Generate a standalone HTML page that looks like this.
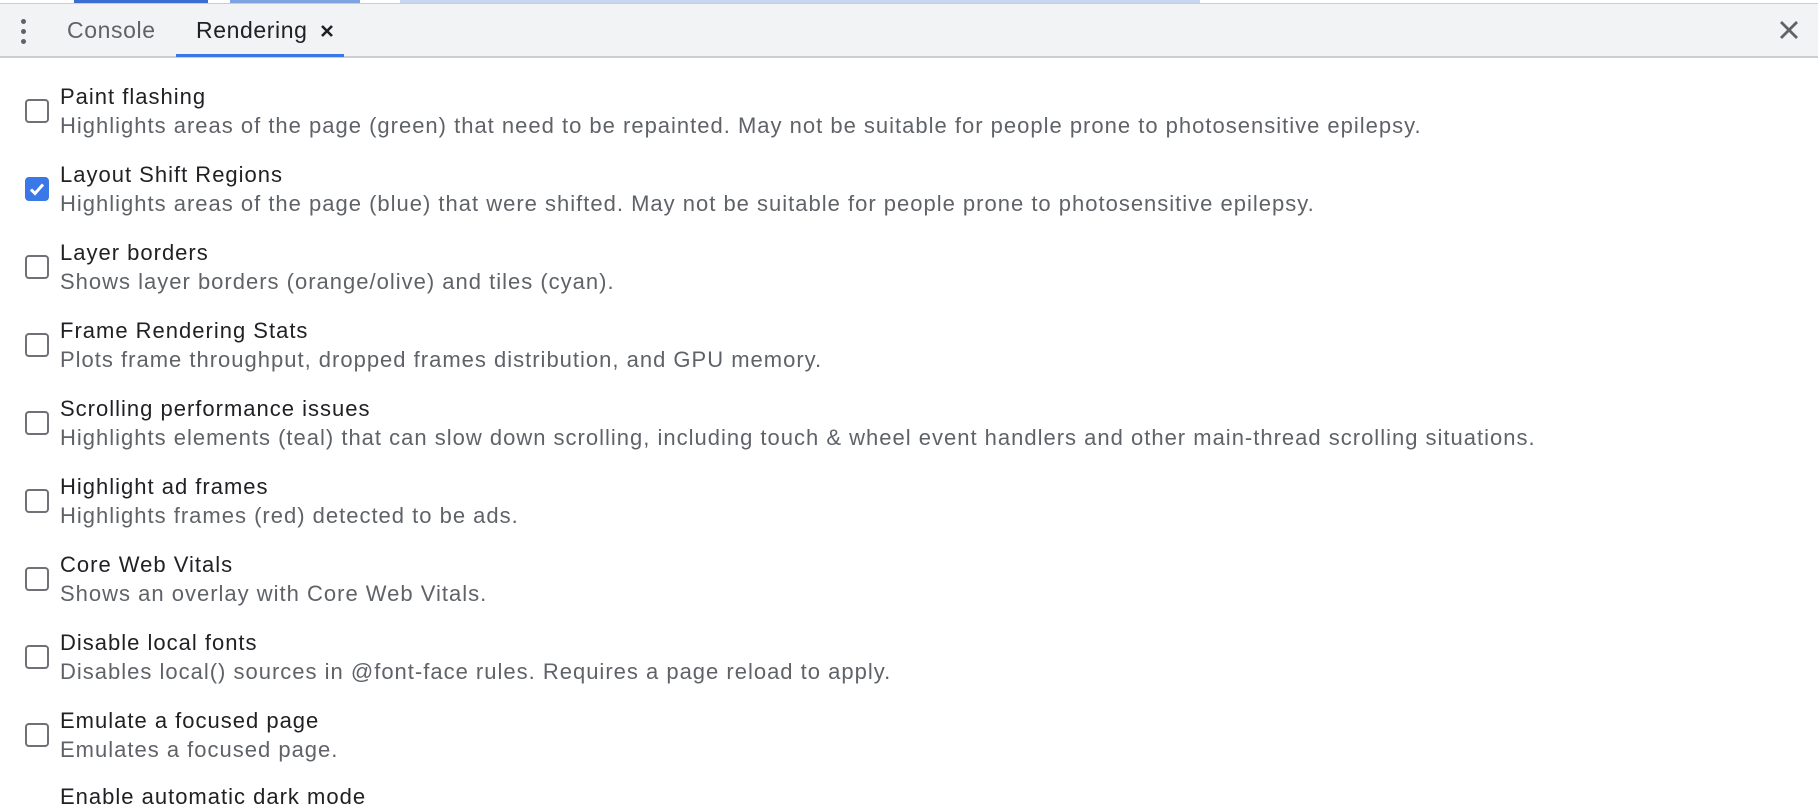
<!DOCTYPE html>
<html><head><meta charset="utf-8"><style>
html,body{margin:0;padding:0;width:1818px;height:792px;overflow:hidden;background:#fff;font-family:"Liberation Sans",Arial,sans-serif;}
.top{position:absolute;left:0;top:0;width:1818px;height:3px;background:#fff;border-bottom:1px solid #cbcdd1;}
.bar{position:absolute;left:0;top:4px;width:1818px;height:52px;background:#f1f3f4;border-bottom:2px solid #cbcdd1;}
.tab{position:absolute;top:4px;height:52px;line-height:52px;font-size:23px;letter-spacing:0.6px;}
.row{position:absolute;left:60px;line-height:29px;letter-spacing:1px;}
.t{font-size:22px;color:#202124;}
.d{font-size:22px;color:#5f6368;}
.cb{position:absolute;left:25px;width:20px;height:20px;border:2px solid #6e7175;border-radius:4px;background:#fff;}
.cb.on{background:#3a78e7;border-color:#3a78e7;}
</style></head><body>
<div class="top"></div>
<div style="position:absolute;left:74px;top:0;width:134px;height:3px;background:#3a6fd0"></div>
<div style="position:absolute;left:230px;top:0;width:130px;height:3px;background:#7fa3e0"></div>
<div style="position:absolute;left:400px;top:0;width:800px;height:3px;background:#c8d6f0"></div>
<div class="bar"></div>
<div style="position:absolute;left:21px;top:19px;width:5px;height:5px;border-radius:50%;background:#5f6368"></div>
<div style="position:absolute;left:21px;top:29px;width:5px;height:5px;border-radius:50%;background:#5f6368"></div>
<div style="position:absolute;left:21px;top:39px;width:5px;height:5px;border-radius:50%;background:#5f6368"></div>
<div class="tab" style="left:67px;color:#5f6368">Console</div>
<div class="tab" style="left:196px;color:#202124">Rendering</div>
<svg style="position:absolute;left:320px;top:24px" width="14" height="14" viewBox="0 0 14 14"><path d="M2 2L12 12M12 2L2 12" stroke="#202124" stroke-width="2.6"/></svg>
<div style="position:absolute;left:176px;top:54px;width:168px;height:3px;background:#3a78e7"></div>
<svg style="position:absolute;left:1779px;top:20px" width="20" height="20" viewBox="0 0 20 20"><path d="M2 2L18 18M18 2L2 18" stroke="#5f6368" stroke-width="2.8"/></svg>

<div class="cb" style="top:99px"></div>
<div class="row" style="top:82px"><div class="t">Paint flashing</div><div class="d">Highlights areas of the page (green) that need to be repainted. May not be suitable for people prone to photosensitive epilepsy.</div></div>

<div class="cb on" style="top:177px"><svg width="20" height="20" viewBox="0 0 20 20" style="position:absolute;left:0;top:0"><path d="M4 10.5L8 14.5L16 5.5" stroke="#fff" stroke-width="3" fill="none"/></svg></div>
<div class="row" style="top:160px"><div class="t">Layout Shift Regions</div><div class="d">Highlights areas of the page (blue) that were shifted. May not be suitable for people prone to photosensitive epilepsy.</div></div>

<div class="cb" style="top:255px"></div>
<div class="row" style="top:238px"><div class="t">Layer borders</div><div class="d">Shows layer borders (orange/olive) and tiles (cyan).</div></div>

<div class="cb" style="top:333px"></div>
<div class="row" style="top:316px"><div class="t">Frame Rendering Stats</div><div class="d">Plots frame throughput, dropped frames distribution, and GPU memory.</div></div>

<div class="cb" style="top:411px"></div>
<div class="row" style="top:394px"><div class="t">Scrolling performance issues</div><div class="d">Highlights elements (teal) that can slow down scrolling, including touch &amp; wheel event handlers and other main-thread scrolling situations.</div></div>

<div class="cb" style="top:489px"></div>
<div class="row" style="top:472px"><div class="t">Highlight ad frames</div><div class="d">Highlights frames (red) detected to be ads.</div></div>

<div class="cb" style="top:567px"></div>
<div class="row" style="top:550px"><div class="t">Core Web Vitals</div><div class="d">Shows an overlay with Core Web Vitals.</div></div>

<div class="cb" style="top:645px"></div>
<div class="row" style="top:628px"><div class="t">Disable local fonts</div><div class="d">Disables local() sources in @font-face rules. Requires a page reload to apply.</div></div>

<div class="cb" style="top:723px"></div>
<div class="row" style="top:706px"><div class="t">Emulate a focused page</div><div class="d">Emulates a focused page.</div></div>

<div class="row" style="top:782px"><div class="t">Enable automatic dark mode</div></div>
</body></html>
